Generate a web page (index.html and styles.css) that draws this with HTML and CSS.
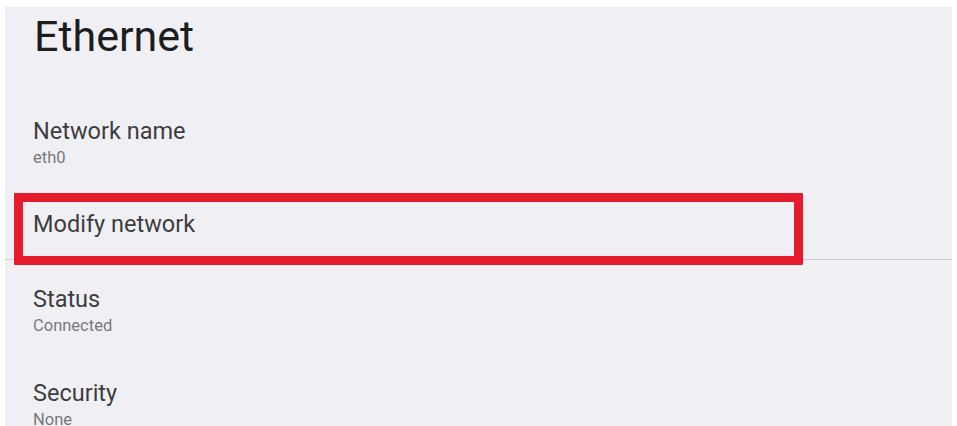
FILE: index.html
```html
<!DOCTYPE html>
<html lang="en">
<head>
<meta charset="utf-8">
<title>Ethernet</title>
<link rel="stylesheet" href="styles.css">
</head>
<body>
  <main class="panel">
    <h1 class="panel-title">Ethernet</h1>
    <ul class="settings">
      <li class="row">
        <div class="row-title">Network name</div>
        <div class="row-sub">eth0</div>
      </li>
      <li class="row row-single row-divider">
        <div class="row-title">Modify network</div>
        <span class="highlight" aria-hidden="true"></span>
      </li>
      <li class="row">
        <div class="row-title">Status</div>
        <div class="row-sub">Connected</div>
      </li>
      <li class="row">
        <div class="row-title">Security</div>
        <div class="row-sub">None</div>
      </li>
    </ul>
  </main>
</body>
</html>
```

FILE: styles.css
```css
html, body {
  margin: 0;
  padding: 0;
  background: #ffffff;
  height: 100%;
  overflow: hidden;
}

body {
  font-family: Roboto, "Noto Sans", "Liberation Sans", sans-serif;
}

.panel {
  margin: 7px 5px 0 5px;
  padding-top: 4px;
  min-height: calc(100vh - 11px);
  background: #f0f0f4;
}

.panel-title {
  margin: 0 0 31px 0;
  padding-left: 29px;
  font-size: 43px;
  font-weight: 400;
  line-height: 50px;
  color: #1d1d1f;
}

.settings {
  list-style: none;
  margin: 0;
  padding: 0;
}

.row {
  position: relative;
  padding: 26px 28px 18px;
}

.row-single {
  padding: 25px 28px 22px;
}

.row-divider {
  border-bottom: 1px solid #cfcfd3;
}

.row-title {
  font-size: 23.5px;
  line-height: 26px;
  color: #3d3d40;
}

.row-sub {
  margin-top: 4px;
  font-size: 16.5px;
  line-height: 20px;
  color: #78787c;
}

/* red callout drawn over the "Modify network" entry */
.highlight {
  position: absolute;
  top: 7px;
  left: 9px;
  width: 789px;
  height: 72px;
  box-sizing: border-box;
  border: 9px solid #e41b2b;
  border-radius: 1px;
}
```
